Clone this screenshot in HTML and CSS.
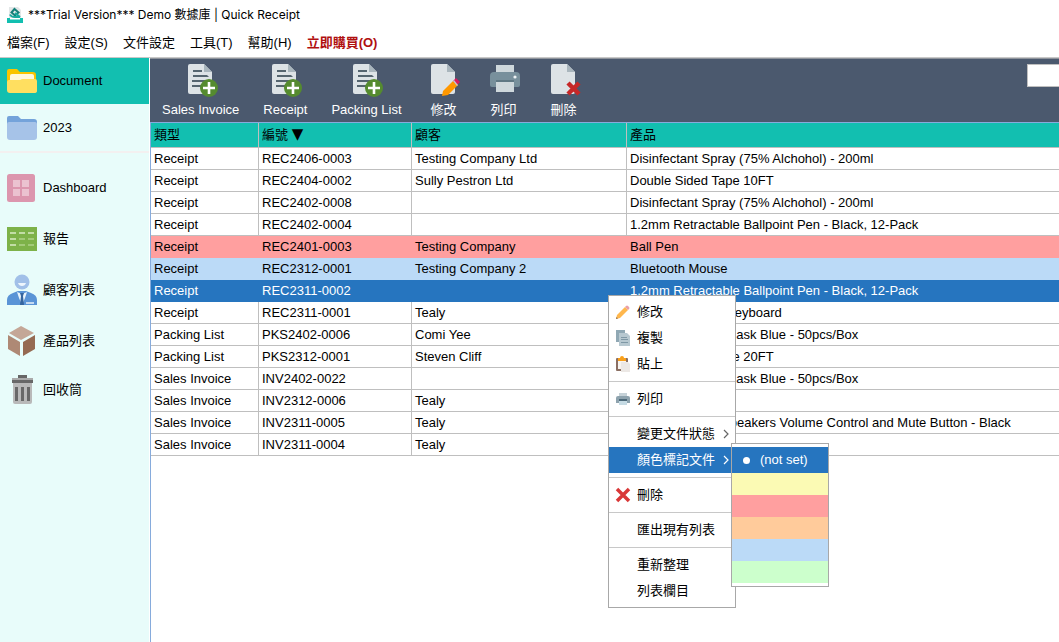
FILE: index.html
```
<!DOCTYPE html>
<html lang="zh-Hant">
<head>
<meta charset="utf-8">
<meta name="viewport" content="width=device-width, initial-scale=1">
<title>Quick Receipt</title>
<link rel="stylesheet" href="styles.css">
</head>
<body>
<svg class="sprite" aria-hidden="true">
  <symbol id="doc-add" viewBox="0 0 32 34">
    <path fill="#dde3e6" d="M3 1h14l8 8v20a2 2 0 0 1-2 2H3a2 2 0 0 1-2-2V3a2 2 0 0 1 2-2z"/>
    <path fill="#a9b6bd" d="M17 1l8 8h-8z"/>
    <path fill="#55656f" d="M6 7h9v2H6zM6 12h14l2 2H6zM5 17h15v2H5zM5 22h11v2H5z"/>
    <circle cx="22" cy="25" r="9" fill="#558b2f"/>
    <path fill="#fff" d="M20.700 19h2.600v4.700H28v2.600h-4.700V31h-2.600v-4.700H16v-2.600h4.700z"/>
  </symbol>
  <symbol id="doc-edit" viewBox="0 0 32 34">
    <path fill="#dde3e6" d="M3 1h14l8 8v20a2 2 0 0 1-2 2H3a2 2 0 0 1-2-2V3a2 2 0 0 1 2-2z"/>
    <path fill="#a9b6bd" d="M17 1l8 8h-8z"/>
    <path fill="#ff9800" d="M13 28l10-10 5 4-10 10-6 1z"/>
    <path fill="#d81b60" d="M26 15l4 4-3 3-4-4z"/>
    <path fill="#c0cbd0" d="M23 18l1-1 4 5-1 1z"/>
  </symbol>
  <symbol id="doc-delete" viewBox="0 0 32 34">
    <path fill="#dde3e6" d="M3 1h14l8 8v20a2 2 0 0 1-2 2H3a2 2 0 0 1-2-2V3a2 2 0 0 1 2-2z"/>
    <path fill="#a9b6bd" d="M17 1l8 8h-8z"/>
    <path stroke="#c62828" stroke-width="4.500" d="M18 20l11 11M29 20L18 31"/>
  </symbol>
  <symbol id="printer-lg" viewBox="1 0 32 34">
    <path fill="#cfd8dc" d="M7 2h18v9H7z"/>
    <path fill="#78909c" d="M5 9h22a4 4 0 0 1 4 4v9a2 2 0 0 1-2 2H3a2 2 0 0 1-2-2v-9a4 4 0 0 1 4-4z"/>
    <path fill="#cfd8dc" d="M7 18h18v11H7z"/>
    <path fill="#607884" d="M7 17h18v2H7z"/>
    <circle cx="26" cy="14" r="1.600" fill="#eef3f5"/>
  </symbol>
  <symbol id="folder-yellow" viewBox="0 0 30 26">
    <path fill="#f9c400" d="M2 1h8l3 3h13a3 3 0 0 1 3 3v10H0V3a2 2 0 0 1 2-2z"/>
    <path fill="#fff8dc" d="M5 6h20a2 2 0 0 1 2 2v7H3V8a2 2 0 0 1 2-2z"/>
    <path fill="#ffdf60" d="M0 14q0-2 2-2h11l2-1h13q2 0 2 2v10q0 2-3 2H3q-3 0-3-3z"/>
  </symbol>
  <symbol id="folder-blue" viewBox="0 0 30 26">
    <path fill="#74a3da" d="M2 1h9l3 3h13a3 3 0 0 1 3 3v4H0V3a2 2 0 0 1 2-2z"/>
    <path fill="#a6c3e8" d="M0 9q0-2 2-2h26q2 0 2 2v13q0 3-3 3H3q-3 0-3-3z"/>
  </symbol>
  <symbol id="dashboard" viewBox="0 0 30 30">
    <rect x="0" y="1" width="28" height="28" rx="2.500" fill="#dc96ae"/>
    <path fill="#ebc2d0" d="M6 7h7v7H6zM15 7h7v7h-7zM6 16h7v7H6zM15 16h7v7h-7z"/>
  </symbol>
  <symbol id="report" viewBox="0 0 30 26">
    <path fill="#7db249" d="M0 1h30v24H0z"/>
    <path fill="#c2dda6" d="M3 6h6v2H3zM12 6h6v2h-6zM21 6h6v2h-6zM3 12h6v2H3zM3 18h6v2H3z"/>
    <path fill="#a2ca79" d="M12 12h6v2h-6zM21 12h6v2h-6zM12 18h6v2h-6zM21 18h6v2h-6z"/>
  </symbol>
  <symbol id="customer" viewBox="0 0 30 32">
    <circle cx="15" cy="8" r="7.500" fill="#a1c0e8"/>
    <path fill="#eef6fd" d="M11 9h8q-1 3-4 3t-4-3z"/>
    <path fill="#5a94d6" d="M0 31v-5q0-5 6-7l5-2h8l5 2q6 2 6 7v5z"/>
    <path fill="#e8f4fb" d="M10 18l5 2 5-2-2 6-3 7-3-7z"/>
    <path fill="#35659f" d="M13 19h4l-1 3 1 9h-4l1-9z"/>
    <path fill="#c5daf1" d="M19 28h8v2h-8z"/>
  </symbol>
  <symbol id="box" viewBox="0 0 30 32">
    <path fill="#c4a797" d="M14 1l13 7-13 7L2 8z"/>
    <path fill="#ae8975" d="M1 10l12 7v14L1 24z"/>
    <path fill="#956a52" d="M28 10l-12 7v14l12-7z"/>
  </symbol>
  <symbol id="trash" viewBox="0 0 30 32">
    <path fill="#666" d="M11 1h9v3h-9z"/>
    <path fill="#aaa" d="M5 4h21v2H5z"/>
    <path fill="#b9b9b9" d="M6 8h19v20q0 2-2 2H8q-2 0-2-2z"/>
    <path fill="#686868" d="M5 6h21v3H5zM8 13h3v14H8zM14 13h3v14h-3zM20 13h3v14h-3z"/>
  </symbol>
  <symbol id="pencil" viewBox="0 0 16 16">
    <path fill="#ffb74d" d="M2 11l8-8 3 3-8 8-4 1z"/>
    <path fill="#e9a0a8" d="M11 2q1-1 2 0l1 1q1 1 0 2l-1 1-3-3z"/>
    <path fill="#8b6d50" d="M1 15l.5-2 1.500 1.500z"/>
  </symbol>
  <symbol id="copy" viewBox="0 0 16 16">
    <path fill="#90a8b4" d="M1 0h9v12H1z"/>
    <path fill="#b7c8d0" d="M4 3h8l3 3v10H4z"/>
    <path fill="#7f98a5" d="M6 7h6v1H6zM6 9h7v1H6zM6 12h7v1H6z"/>
  </symbol>
  <symbol id="paste" viewBox="0 0 16 16">
    <rect x="1" y="2" width="12" height="13" rx="1" fill="#8b6f63"/>
    <path fill="#f8f4f0" d="M3 5h8v8H3z"/>
    <path fill="#f9a01b" d="M3 2h2q0-2 2-2t2 2h2v3H3z"/>
    <path fill="#ece8e5" d="M6 6h7l2 2v8H6z"/>
  </symbol>
  <symbol id="printer" viewBox="0 0 16 16">
    <path fill="#c6d2d8" d="M4 2h8v4H4z"/>
    <path fill="#8ea3ae" d="M3 5h10q2 0 2 2v5H1V7q0-2 2-2z"/>
    <path fill="#4d6979" d="M4 8h8v2H4z"/>
    <path fill="#c6dbe4" d="M4 10h8v4H4z"/>
  </symbol>
  <symbol id="cross" viewBox="0 0 16 16">
    <path stroke="#d93838" stroke-width="3.500" d="M2 2l12 12M14 2L2 14"/>
  </symbol>
  <symbol id="chevron" viewBox="0 0 8 12">
    <path fill="none" stroke="currentColor" stroke-width="1.200" d="M2 2l4 4-4 4"/>
  </symbol>
</svg>

<header class="titlebar">
  <svg class="app-logo" viewBox="0 0 16 16" aria-hidden="true">
    <path fill="#e3e7e8" d="M2 0h9l3 3v8H2z"/>
    <path fill="#12bfb0" d="M0 11h16v5H0z"/>
    <path fill="#fff" d="M3 11h10v1.500H3z"/>
    <path fill="none" stroke="#147f78" stroke-width="2" d="M7.500 2L11.500 5.500 8 8.500 4.500 5.500z"/>
    <path fill="none" stroke="#16a99d" stroke-width="2" d="M3 7.500q1 2.500 5 2.500h5M8 6l5 4"/>
  </svg>
  <span>***Trial Version*** Demo 數據庫 | Quick Receipt</span>
</header>

<nav class="menubar">
  <button type="button">檔案(F)</button>
  <button type="button">設定(S)</button>
  <button type="button">文件設定</button>
  <button type="button">工具(T)</button>
  <button type="button">幫助(H)</button>
  <button type="button" class="buy">立即購買(O)</button>
</nav>

<div class="workspace">
  <aside class="sidebar">
    <div class="folders">
      <button type="button" class="active"><svg class="folder"><use href="#folder-yellow"/></svg>Document</button>
      <button type="button"><svg class="folder"><use href="#folder-blue"/></svg>2023</button>
    </div>
    <div class="sections">
      <button type="button"><svg><use href="#dashboard"/></svg>Dashboard</button>
      <button type="button"><svg><use href="#report"/></svg>報告</button>
      <button type="button"><svg><use href="#customer"/></svg>顧客列表</button>
      <button type="button"><svg><use href="#box"/></svg>產品列表</button>
      <button type="button"><svg><use href="#trash"/></svg>回收筒</button>
    </div>
  </aside>

  <main class="content">
    <div class="toolbar">
      <button type="button"><svg><use href="#doc-add"/></svg>Sales Invoice</button>
      <button type="button"><svg><use href="#doc-add"/></svg>Receipt</button>
      <button type="button"><svg><use href="#doc-add"/></svg>Packing List</button>
      <button type="button"><svg><use href="#doc-edit"/></svg>修改</button>
      <button type="button"><svg><use href="#printer-lg"/></svg>列印</button>
      <button type="button"><svg><use href="#doc-delete"/></svg>刪除</button>
      <input class="search" type="text" aria-label="搜尋">
    </div>
    <div class="list">
      <table>
        <colgroup><col class="col-type"><col class="col-number"><col class="col-customer"><col></colgroup>
        <thead>
          <tr><th scope="col">類型</th><th scope="col" aria-sort="descending">編號 <span class="sort">▼</span></th><th scope="col">顧客</th><th scope="col">產品</th></tr>
        </thead>
        <tbody>
          <tr><td>Receipt</td><td>REC2406-0003</td><td>Testing Company Ltd</td><td>Disinfectant Spray (75% Alchohol) - 200ml</td></tr>
          <tr><td>Receipt</td><td>REC2404-0002</td><td>Sully Pestron Ltd</td><td>Double Sided Tape 10FT</td></tr>
          <tr><td>Receipt</td><td>REC2402-0008</td><td></td><td>Disinfectant Spray (75% Alchohol) - 200ml</td></tr>
          <tr><td>Receipt</td><td>REC2402-0004</td><td></td><td>1.2mm Retractable Ballpoint Pen - Black, 12-Pack</td></tr>
          <tr class="red"><td>Receipt</td><td>REC2401-0003</td><td>Testing Company</td><td>Ball Pen</td></tr>
          <tr class="blue"><td>Receipt</td><td>REC2312-0001</td><td>Testing Company 2</td><td>Bluetooth Mouse</td></tr>
          <tr class="selected"><td>Receipt</td><td>REC2311-0002</td><td></td><td>1.2mm Retractable Ballpoint Pen - Black, 12-Pack</td></tr>
          <tr><td>Receipt</td><td>REC2311-0001</td><td>Tealy</td><td>USB Ergonomic Keyboard</td></tr>
          <tr><td>Packing List</td><td>PKS2402-0006</td><td>Comi Yee</td><td>Disposable 3ply Mask Blue - 50pcs/Box</td></tr>
          <tr><td>Packing List</td><td>PKS2312-0001</td><td>Steven Cliff</td><td>Double Sided Tape 20FT</td></tr>
          <tr><td>Sales Invoice</td><td>INV2402-0022</td><td></td><td>Disposable 3ply Mask Blue - 50pcs/Box</td></tr>
          <tr><td>Sales Invoice</td><td>INV2312-0006</td><td>Tealy</td><td></td></tr>
          <tr><td>Sales Invoice</td><td>INV2311-0005</td><td>Tealy</td><td>Computer USB Speakers Volume Control and Mute Button - Black</td></tr>
          <tr><td>Sales Invoice</td><td>INV2311-0004</td><td>Tealy</td><td></td></tr>
        </tbody>
      </table>
    </div>
  </main>
</div>

<div class="menu context-menu">
  <button type="button"><svg><use href="#pencil"/></svg><span>修改</span></button>
  <button type="button"><svg><use href="#copy"/></svg><span>複製</span></button>
  <button type="button"><svg><use href="#paste"/></svg><span>貼上</span></button>
  <hr>
  <button type="button"><svg><use href="#printer"/></svg><span>列印</span></button>
  <hr>
  <button type="button"><span>變更文件狀態</span><svg class="arrow"><use href="#chevron"/></svg></button>
  <button type="button" class="open"><span>顏色標記文件</span><svg class="arrow"><use href="#chevron"/></svg></button>
  <hr>
  <button type="button"><svg><use href="#cross"/></svg><span>刪除</span></button>
  <hr>
  <button type="button"><span>匯出現有列表</span></button>
  <hr>
  <button type="button"><span>重新整理</span></button>
  <button type="button"><span>列表欄目</span></button>
</div>

<div class="menu submenu">
  <button type="button" class="open"><i class="dot"></i>(not set)</button>
  <button type="button" class="swatch yellow" aria-label="黃色"></button>
  <button type="button" class="swatch red" aria-label="紅色"></button>
  <button type="button" class="swatch orange" aria-label="橙色"></button>
  <button type="button" class="swatch blue" aria-label="藍色"></button>
  <button type="button" class="swatch green" aria-label="綠色"></button>
</div>
</body>
</html>
```

FILE: styles.css
```
:root {
  --teal: #12bfb0;
  --slate: #4b596e;
  --select: #2675bf;
  --line: #bfbfbf;
  --red: #ff9f9f;
  --blue: #bbdaf7;
}

* { box-sizing: border-box; }

body {
  position: relative;
  display: flex;
  flex-direction: column;
  min-height: 100vh;
  margin: 0;
  overflow: hidden;
  background: #fff;
  color: #000;
  font: 13px/20px "Liberation Sans", "Noto Sans CJK TC", sans-serif;
}

button {
  margin: 0;
  padding: 0;
  border: 0;
  background: none;
  color: inherit;
  font: inherit;
  white-space: nowrap;
}

svg { flex: none; }

.sprite { position: absolute; width: 0; height: 0; }

.titlebar {
  display: flex;
  align-items: center;
  gap: 5px;
  height: 30px;
  padding-left: 7px;
  font: 12px/20px Inter, "Noto Sans CJK TC", sans-serif;
}

.app-logo { width: 16px; height: 16px; }

.menubar {
  display: flex;
  gap: 15px;
  height: 28px;
  padding: 3px 0 4px 7px;
  border-bottom: 1px solid #c8c8c8;
}

.menubar .buy { color: #b01010; font-weight: bold; }

.workspace { display: flex; flex: 1; }

.sidebar {
  flex: none;
  width: 150px;
  border-right: 1px solid #fff;
  background: #e8fcfa;
}

.sidebar button {
  display: flex;
  align-items: center;
  gap: 6px;
  width: 100%;
  padding-left: 7px;
}

.sidebar svg { width: 30px; height: 32px; }
.sidebar .folder { height: 26px; }

.folders { border-bottom: 2px solid #f3f0f0; }
.folders button { height: 47px; }
.folders .active { height: 46px; background: var(--teal); }

.sections { padding-top: 9px; }
.sections button { height: 51px; }
.sections button:last-child { height: 47px; }

.content {
  display: flex;
  flex: 1;
  flex-direction: column;
  min-width: 0;
}

.toolbar {
  display: flex;
  height: 64px;
  border-top: 1px solid #8f949c;
  background: var(--slate);
  color: #fff;
}

.toolbar button {
  display: flex;
  flex-direction: column;
  align-items: center;
  gap: 3px;
  min-width: 58px;
  padding: 4px 12px 0;
}

.toolbar svg { width: 32px; height: 34px; margin-left: 4px; }

.search {
  width: 32px;
  height: 23px;
  margin: 5px 0 0 auto;
  border: 1px solid var(--line);
  border-right: 0;
  background: #fff;
}

.list {
  flex: 1;
  border-top: 1px solid #86abdc;
  border-left: 1px solid #86abdc;
}

table {
  width: 100%;
  table-layout: fixed;
  border-spacing: 0;
}

.col-type { width: 108px; }
.col-number { width: 153px; }
.col-customer { width: 215px; }

th, td {
  height: 22px;
  padding: 0 0 0 3px;
  border-right: 1px solid var(--line);
  border-bottom: 1px solid var(--line);
  text-align: left;
  white-space: nowrap;
}

th { height: 25px; background: var(--teal); font-weight: normal; }
th:last-child, td:last-child { border-right: 0; }

.sort { font: 15px/16px "DejaVu Sans", sans-serif; }

tr.red td { border-color: var(--red); background: var(--red); }
tr.blue td { border-color: var(--blue); background: var(--blue); }
tr.selected td { border-color: var(--select); background: var(--select); color: #fff; }

.menu {
  position: absolute;
  display: flex;
  flex-direction: column;
  padding: 3px 0;
  border: 1px solid #a8a8a8;
  background: #fff;
}

.context-menu { top: 295px; left: 608px; width: 128px; }
.submenu { top: 443px; left: 731px; width: 98px; }

.menu button { height: 26px; }

.context-menu button {
  display: grid;
  grid-template-columns: 16px 1fr 8px;
  align-items: center;
  column-gap: 6px;
  padding: 0 5px 0 6px;
  text-align: left;
}

.context-menu svg { width: 16px; height: 16px; }
.context-menu span { grid-column: 2; white-space: nowrap; }
.context-menu .arrow { width: 8px; height: 12px; grid-column: 3; color: #666; }
.context-menu .open .arrow { color: #fff; }

.menu .open { background: var(--select); color: #fff; }

.menu hr {
  width: 100%;
  height: 1px;
  margin: 4px 0;
  border: 0;
  background: #c8c8c8;
}

.submenu button {
  display: flex;
  align-items: center;
  gap: 10px;
  padding-left: 11px;
}

.dot { width: 7px; height: 7px; border-radius: 50%; background: #fff; }

.submenu .swatch { height: 22px; }
.swatch.yellow { background: #fbfab4; }
.swatch.red { background: var(--red); }
.swatch.orange { background: #ffcb9b; }
.swatch.blue { background: var(--blue); }
.swatch.green { background: #ccffcc; }
```
